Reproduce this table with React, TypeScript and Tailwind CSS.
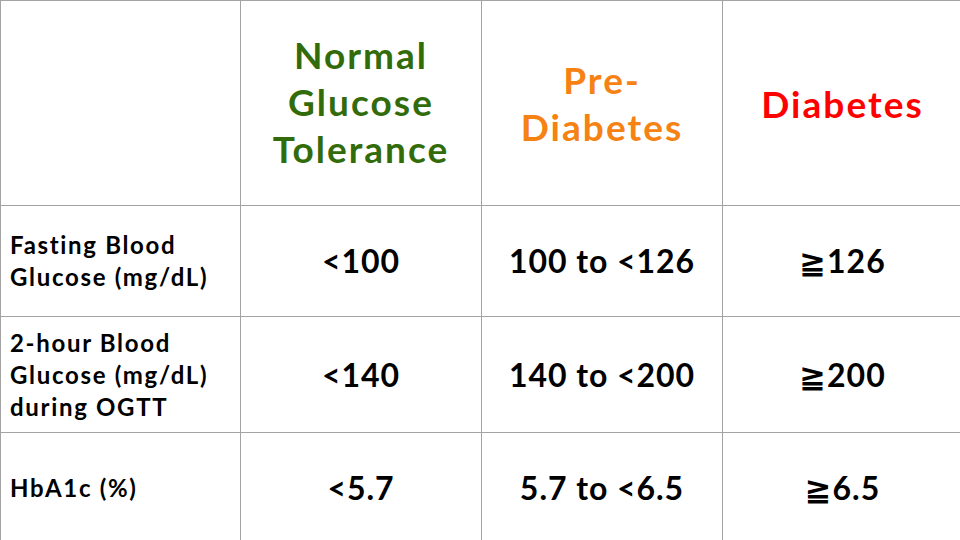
import React from 'react';

const cell = 'border-t border-l border-[#a3a3a3] flex items-center';
const head = `${cell} h-[205px] justify-center text-center text-[37px] leading-[47px] tracking-[0.055em]`;

const rows = [
  { label: ['Fasting Blood', 'Glucose (mg/dL)'], h: 'h-[111px]', vals: ['<100', '100 to <126', '≧126'] },
  { label: ['2-hour Blood', 'Glucose (mg/dL)', 'during OGTT'], h: 'h-[116px]', vals: ['<140', '140 to <200', '≧200'] },
  { label: ['HbA1c (%)'], h: 'h-[110px]', vals: ['<5.7', '5.7 to <6.5', '≧6.5'] },
];

export default function App() {
  return (
    <div className="w-[960px] h-[540px] overflow-hidden bg-white font-['Lato','DejaVu_Sans',sans-serif] font-bold">
      <div className="grid grid-cols-[240px_241px_241px_240px]">
        <div className={`${cell} h-[205px]`} />
        <div className={`${head} text-[#326b0a]`}>
          <span className="-mt-[3px]">Normal<br />Glucose<br />Tolerance</span>
        </div>
        <div className={`${head} text-[#f58212]`}>
          <span>Pre-<br />Diabetes</span>
        </div>
        <div className={`${head} text-[#ff0000]`}>
          <span>Diabetes</span>
        </div>
        {rows.map((r) => (
          <React.Fragment key={r.label[0]}>
            <div className={`${cell} ${r.h} pl-[9px] text-[24px] leading-[32px] tracking-[0.07em] text-black`}>
              <span>
                {r.label.map((l, i) => (
                  <React.Fragment key={l}>
                    {i > 0 && <br />}
                    {l}
                  </React.Fragment>
                ))}
              </span>
            </div>
            {r.vals.map((v) => (
              <div key={v} className={`${cell} ${r.h} justify-center text-[32px] tracking-[0.03em] text-black`}>
                {v}
              </div>
            ))}
          </React.Fragment>
        ))}
      </div>
    </div>
  );
}
